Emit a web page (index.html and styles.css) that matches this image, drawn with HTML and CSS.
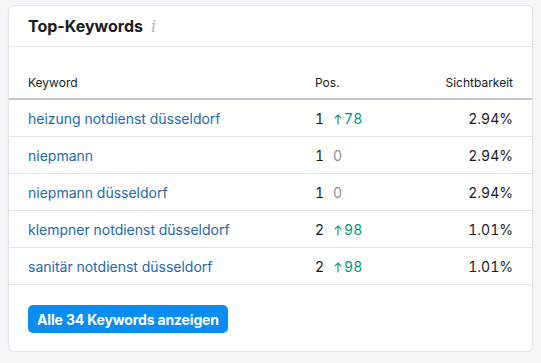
FILE: index.html
```html
<!DOCTYPE html>
<html lang="de">
<head>
<meta charset="utf-8">
<link rel="stylesheet" href="styles.css">
</head>
<body>
<div class="card">
  <div class="card-head">
    <h2 class="title">Top-Keywords</h2>
    <span class="info">i</span>
  </div>
  <table class="kw">
    <thead>
      <tr><th class="c-kw">Keyword</th><th class="c-pos">Pos.</th><th class="c-vis">Sichtbarkeit</th></tr>
    </thead>
    <tbody>
      <tr><td class="c-kw"><a>heizung notdienst düsseldorf</a></td><td class="c-pos">1<span class="up"><svg class="arr" viewBox="0 0 8 11" width="8" height="11"><path d="M4 10.5V1M0.8 4.2L4 1l3.2 3.2"/></svg>78</span></td><td class="c-vis">2.94%</td></tr>
      <tr><td class="c-kw"><a>niepmann</a></td><td class="c-pos">1<span class="zero">0</span></td><td class="c-vis">2.94%</td></tr>
      <tr><td class="c-kw"><a>niepmann düsseldorf</a></td><td class="c-pos">1<span class="zero">0</span></td><td class="c-vis">2.94%</td></tr>
      <tr><td class="c-kw"><a>klempner notdienst düsseldorf</a></td><td class="c-pos">2<span class="up"><svg class="arr" viewBox="0 0 8 11" width="8" height="11"><path d="M4 10.5V1M0.8 4.2L4 1l3.2 3.2"/></svg>98</span></td><td class="c-vis">1.01%</td></tr>
      <tr><td class="c-kw"><a>sanitär notdienst düsseldorf</a></td><td class="c-pos">2<span class="up"><svg class="arr" viewBox="0 0 8 11" width="8" height="11"><path d="M4 10.5V1M0.8 4.2L4 1l3.2 3.2"/></svg>98</span></td><td class="c-vis">1.01%</td></tr>
    </tbody>
  </table>
  <div class="card-foot">
    <button class="btn">Alle 34 Keywords anzeigen</button>
  </div>
</div>
</body>
</html>
```
FILE: styles.css
```css
html, body { margin: 0; padding: 0; }
body {
  background: #f4f5f9;
  font-family: Inter, "Noto Sans", sans-serif;
  color: #191b23;
  padding: 5px 8px 0 8px;
}
.card {
  width: 525px;
  height: 347px;
  box-sizing: border-box;
  background: #fff;
  border: 1px solid #e3e4ea;
  border-radius: 6px;
  box-shadow: 0 1px 2px rgba(0,0,0,0.06);
}
.card-head {
  display: flex;
  align-items: center;
  gap: 8px;
  height: 40px;
  padding: 0 19px;
  border-bottom: 1px solid #e3e4ea;
}
.title {
  margin: 0;
  font-size: 16px;
  font-weight: 700;
  color: #191b23;
}
.info {
  font-family: "DejaVu Serif", serif;
  font-style: italic;
  font-size: 16px;
  color: #b0b2ba;
}
.kw {
  width: 100%;
  border-collapse: collapse;
  font-size: 14px;
  font-variant-numeric: tabular-nums;
}
.kw th {
  font-weight: 400;
  font-size: 12px;
  text-align: left;
  height: 32px;
  padding: 19px 0 0 0;
  vertical-align: middle;
  border-bottom: 2px solid #c4c7cf;
}
.kw td {
  height: 36px;
  padding: 0;
  border-bottom: 1px solid #e3e4ea;
  vertical-align: middle;
}
.kw .c-kw { padding-left: 19px; }
.kw .c-pos { width: 98px; }
.kw .c-vis { width: 100px; text-align: right; padding-right: 19px; }
.kw a { color: #2369ae; text-decoration: none; }
.up { color: #00977a; margin-left: 10px; }
.arr {
  fill: none;
  stroke: #00977a;
  stroke-width: 1.1;
  margin-right: 2px;
  vertical-align: -1px;
}
.zero { color: #8d8f97; margin-left: 9px; }
.card-foot {
  padding: 20px 19px;
}
.btn {
  font-family: Inter, "Noto Sans", sans-serif;
  background: #0a8df0;
  color: #fff;
  border: none;
  border-radius: 5px;
  height: 28px;
  padding: 0 9px;
  font-size: 14px;
  font-weight: 700;
  letter-spacing: -0.16px;
}
```
